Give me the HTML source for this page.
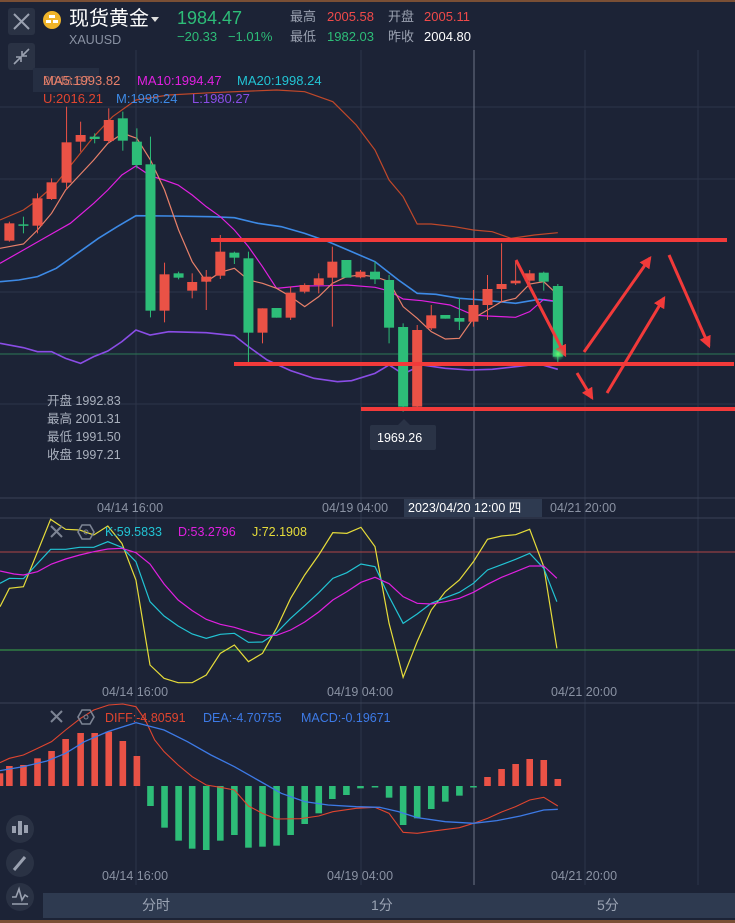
<!DOCTYPE html>
<html><head><meta charset="utf-8"><style>
*{margin:0;padding:0}
body{width:735px;height:923px;background:#1c2336;position:relative;overflow:hidden;font-family:"Liberation Sans","Noto Sans CJK SC",sans-serif}
.t{position:absolute;white-space:nowrap;line-height:1}
svg{position:absolute;left:0;top:0}
</style></head><body>
<svg width="735" height="923" viewBox="0 0 735 923">
<defs><marker id="ah" viewBox="0 0 10 10" refX="8" refY="5" markerWidth="4" markerHeight="4" orient="auto"><path d="M0,0L10,5L0,10z" fill="#f23a3a"/></marker>
<radialGradient id="gd"><stop offset="0" stop-color="#6cff6c"/><stop offset="1" stop-color="#2dbd78" stop-opacity="0"/></radialGradient></defs>
<rect x="0" y="0" width="735" height="2" fill="#7a4f35"/>
<rect x="0" y="920" width="735" height="3" fill="#7a4f35"/>
<g stroke="#2d3549" stroke-width="1">
<line x1="0" y1="107" x2="735" y2="107"/><line x1="0" y1="179" x2="735" y2="179"/><line x1="0" y1="292" x2="735" y2="292"/><line x1="0" y1="404" x2="735" y2="404"/>
<line x1="136" y1="50" x2="136" y2="885"/><line x1="361" y1="50" x2="361" y2="885"/><line x1="585" y1="50" x2="585" y2="885"/><line x1="698" y1="50" x2="698" y2="885"/>
</g>
<line x1="0" y1="498" x2="735" y2="498" stroke="#3a4257"/>
<line x1="0" y1="518" x2="735" y2="518" stroke="#3a4257"/>
<line x1="0" y1="703" x2="735" y2="703" stroke="#3a4257"/>
<line x1="474" y1="50" x2="474" y2="885" stroke="#6c7386"/>
<line x1="0" y1="354" x2="735" y2="354" stroke="#2c7a55"/>
<g transform="translate(0,80) scale(0.46875,0.33333)" fill="none" stroke-width="1.2">
<polyline vector-effect="non-scaling-stroke" stroke="#c0482a" points="0,420 50,390 80,360 120,310 160,240 200,170 240,110 290,60 360,45 450,38 590,30 650,35 710,65 760,135 800,210 830,300 860,350 890,432 920,432 970,440 1010,450 1050,455 1090,475 1140,465 1190,458"/>
<polyline vector-effect="non-scaling-stroke" stroke="#3d8ae6" stroke-width="1.6" points="0,605 40,600 80,590 120,565 170,515 210,475 250,440 290,407 360,408 450,410 500,413 550,430 600,440 650,460 700,485 750,515 800,545 850,600 890,640 930,643 980,655 1030,660 1100,670 1150,658 1190,665"/>
<polyline vector-effect="non-scaling-stroke" stroke="#8a4de6" stroke-width="1.6" points="0,790 50,803 80,815 110,815 140,835 172,850 200,830 230,813 260,785 290,750 320,765 360,755 440,758 500,767 530,800 570,840 620,872 670,895 720,905 750,902 800,880 830,855 860,882 900,855 950,865 1000,870 1050,868 1100,860 1150,852 1190,868"/>
<polyline vector-effect="non-scaling-stroke" stroke="#e020e0" points="0,550 50,510 100,470 150,430 200,370 230,330 260,285 290,258 320,287 350,300 380,315 410,345 440,380 470,410 500,450 530,500 560,560 590,625 640,618 700,617 740,615 800,622 830,633 860,657 900,662 960,675 1010,705 1040,708 1100,712 1130,695 1160,658 1190,665"/>
<polyline vector-effect="non-scaling-stroke" stroke="#e8806a" points="0,505 50,492 80,450 110,400 140,330 170,285 200,240 230,190 262,160 292,175 321,240 351,330 381,450 410,545 440,605 470,577 500,565 530,600 560,610 590,625 620,650 650,680 680,650 709,610 739,590 769,585 800,590 830,605 860,680 890,715 920,755 950,777 980,775 1010,715 1040,690 1070,665 1100,655 1130,612 1160,605 1190,645"/>
</g>
<g id="candles"></g>
<g fill="#f23a3a">
<rect x="211" y="238" width="516" height="4"/>
<rect x="234" y="362" width="500" height="4"/>
<rect x="361" y="407" width="374" height="4"/>
</g>
<g stroke="#f23a3a" stroke-width="3" marker-end="url(#ah)" fill="none">
<line x1="516" y1="260" x2="565" y2="355"/>
<line x1="577" y1="373" x2="592" y2="398"/>
<line x1="584" y1="352" x2="650" y2="258"/>
<line x1="607" y1="393" x2="664" y2="298"/>
<line x1="669" y1="255" x2="709" y2="346"/>
</g>
<circle cx="558" cy="354" r="7" fill="url(#gd)"/>
<line x1="0" y1="552" x2="735" y2="552" stroke="#b04545"/>
<line x1="0" y1="650" x2="735" y2="650" stroke="#3aa84a"/>
<g transform="translate(0,490) scale(0.46875,0.33333)" fill="none">
<polyline vector-effect="non-scaling-stroke" stroke="#e6dc3a" stroke-width="1.2" points="0,350 20,295 50,290 108,88 140,118 170,120 200,135 230,108 260,160 290,270 320,525 350,565 380,578 410,578 440,555 470,490 500,465 530,515 560,490 590,415 620,325 650,255 680,195 710,128 740,130 770,112 800,170 830,400 860,562 890,455 920,360 950,305 980,270 1010,215 1040,148 1070,138 1100,134 1130,118 1160,230 1188,475"/>
<polyline vector-effect="non-scaling-stroke" stroke="#22c4d4" stroke-width="1.2" points="0,280 20,265 50,266 108,178 140,178 170,172 200,172 230,155 260,172 290,215 320,335 350,378 380,408 410,432 440,445 470,433 500,430 530,457 560,456 590,428 620,385 650,347 680,308 710,265 740,248 770,222 800,230 830,320 860,400 890,372 920,340 950,323 980,307 1010,280 1040,240 1070,224 1100,208 1130,190 1160,235 1188,335"/>
<polyline vector-effect="non-scaling-stroke" stroke="#e020e0" stroke-width="1.2" points="0,243 30,252 50,255 80,245 110,222 140,207 170,195 200,185 230,177 260,175 290,188 320,222 350,282 380,330 410,362 440,388 470,403 500,412 530,425 560,436 590,436 620,420 650,396 680,366 710,330 740,305 770,277 800,262 830,281 860,320 890,340 920,342 950,335 980,325 1010,307 1040,283 1070,262 1100,245 1130,228 1160,228 1188,265"/>
</g>
<g id="macd"></g>
<g transform="translate(0,700) scale(0.46875,0.33333)" fill="none">
<polyline vector-effect="non-scaling-stroke" stroke="#e0452f" stroke-width="1.1" points="0,188 20,175 50,165 80,145 110,125 140,90 172,55 200,30 232,15 262,12 290,20 310,60 330,120 350,155 380,195 410,230 440,255 470,262 500,270 530,318 560,340 590,357 640,356 680,348 710,335 760,325 800,322 830,340 860,397 890,400 930,392 980,383 1010,370 1040,355 1070,336 1100,320 1130,300 1160,292 1190,318"/>
<polyline vector-effect="non-scaling-stroke" stroke="#3d7ae6" stroke-width="1.3" points="0,212 50,200 100,183 140,160 180,125 230,95 290,68 350,90 400,125 450,165 500,200 550,240 600,280 650,305 700,315 760,320 810,322 850,335 890,353 950,365 1010,370 1060,362 1110,348 1160,330 1190,328"/>
</g>
<rect x="8" y="8" width="27" height="27" rx="3" fill="#2a3244"/>
<path d="M14,14L29,29M29,14L14,29" stroke="#9aa1b0" stroke-width="2"/>
<rect x="8" y="43" width="27" height="27" rx="3" fill="#2a3244"/>
<path d="M14,64L20,58M16,57h5v5M29,49L23,55M22,51v5h5" stroke="#9aa1b0" stroke-width="1.6" fill="none"/>
<circle cx="20" cy="829" r="14" fill="#2a3244"/>
<g fill="#9aa1b0"><rect x="12" y="826" width="4" height="7"/><rect x="18" y="821" width="4" height="14"/><rect x="24" y="825" width="4" height="8"/></g>
<circle cx="20" cy="863" r="14" fill="#2a3244"/>
<path d="M14,870L25,857" stroke="#9aa1b0" stroke-width="3"/>
<circle cx="20" cy="897" r="14" fill="#2a3244"/>
<path d="M12,897L16,897L19,889L22,900L25,895L28,897M12,904H28" stroke="#9aa1b0" stroke-width="1.6" fill="none"/>
<path d="M51,526L62,537M62,526L51,537" stroke="#7d8494" stroke-width="2"/>
<polygon points="82,525 90,525 94,532 90,539 82,539 78,532" fill="none" stroke="#7d8494" stroke-width="1.6"/><circle cx="86" cy="532" r="2" fill="none" stroke="#7d8494"/>
<path d="M51,711L62,722M62,711L51,722" stroke="#7d8494" stroke-width="2"/>
<polygon points="82,710 90,710 94,717 90,724 82,724 78,717" fill="none" stroke="#7d8494" stroke-width="1.6"/><circle cx="86" cy="717" r="2" fill="none" stroke="#7d8494"/>
<circle cx="52" cy="20" r="9" fill="#f0b429"/>
<g fill="#fff"><rect x="49" y="15" width="6" height="3"/><rect x="46" y="20" width="5" height="3"/><rect x="53" y="20" width="5" height="3"/></g>
<polygon points="151,17 159,17 155,22" fill="#ddd"/>
<rect x="370" y="425" width="66" height="25" rx="2" fill="#2a3346"/>
<polygon points="398,425 404,419 410,425" fill="#2a3346"/>
<rect x="404" y="499" width="138" height="18" fill="#2e3a50"/>
<rect x="43" y="893" width="692" height="25" fill="#2e3a50"/>
<rect x="33" y="68" width="66" height="24" fill="#252e42"/>
</svg>
<div class="t" style="left:69px;top:9px;font-size:20px;color:#fff">现货黄金</div>
<div class="t" style="left:69px;top:34px;font-size:12.5px;color:#8a92a3">XAUUSD</div>
<div class="t" style="left:177px;top:9px;font-size:18px;color:#2dbd78">1984.47</div>
<div class="t" style="left:177px;top:30px;font-size:13px;color:#2dbd78">−20.33&nbsp;&nbsp;&nbsp;−1.01%</div>
<div class="t" style="left:290px;top:10px;font-size:13px;color:#9aa1b0">最高</div>
<div class="t" style="left:327px;top:10px;font-size:13px;color:#f04a4a">2005.58</div>
<div class="t" style="left:388px;top:10px;font-size:13px;color:#9aa1b0">开盘</div>
<div class="t" style="left:424px;top:10px;font-size:13px;color:#f04a4a">2005.11</div>
<div class="t" style="left:290px;top:30px;font-size:13px;color:#9aa1b0">最低</div>
<div class="t" style="left:327px;top:30px;font-size:13px;color:#2dbd78">1982.03</div>
<div class="t" style="left:388px;top:30px;font-size:13px;color:#9aa1b0">昨收</div>
<div class="t" style="left:424px;top:30px;font-size:13px;color:#fff">2004.80</div>
<div class="t" style="left:43px;top:74px;font-size:13px;color:#e8806a">MA5:1993.82</div>
<div class="t" style="left:43px;top:74px;font-size:13px;color:#e8806a;opacity:.6">2048.67</div>
<div class="t" style="left:137px;top:74px;font-size:13px;color:#e020e0">MA10:1994.47</div>
<div class="t" style="left:237px;top:74px;font-size:13px;color:#22c4d4">MA20:1998.24</div>
<div class="t" style="left:43px;top:92px;font-size:13px;color:#e0452f">U:2016.21</div>
<div class="t" style="left:116px;top:92px;font-size:13px;color:#3d8ae6">M:1998.24</div>
<div class="t" style="left:192px;top:92px;font-size:13px;color:#8a4de6">L:1980.27</div>
<div class="t" style="left:47px;top:392px;font-size:12.5px;color:#a9b0bd;line-height:18px">开盘 1992.83<br>最高 2001.31<br>最低 1991.50<br>收盘 1997.21</div>
<div class="t" style="left:377px;top:432px;font-size:12.5px;color:#fff">1969.26</div>
<div class="t" style="left:97px;top:502px;font-size:12.5px;color:#8a92a3">04/14 16:00</div>
<div class="t" style="left:322px;top:502px;font-size:12.5px;color:#8a92a3">04/19 04:00</div>
<div class="t" style="left:408px;top:502px;font-size:12.5px;color:#fff">2023/04/20 12:00 四</div>
<div class="t" style="left:550px;top:502px;font-size:12.5px;color:#8a92a3">04/21 20:00</div>
<div class="t" style="left:105px;top:526px;font-size:12.5px;color:#22c4d4">K:59.5833</div>
<div class="t" style="left:178px;top:526px;font-size:12.5px;color:#e020e0">D:53.2796</div>
<div class="t" style="left:252px;top:526px;font-size:12.5px;color:#e6dc3a">J:72.1908</div>
<div class="t" style="left:102px;top:686px;font-size:12.5px;color:#8a92a3">04/14 16:00</div>
<div class="t" style="left:327px;top:686px;font-size:12.5px;color:#8a92a3">04/19 04:00</div>
<div class="t" style="left:551px;top:686px;font-size:12.5px;color:#8a92a3">04/21 20:00</div>
<div class="t" style="left:105px;top:712px;font-size:12.5px;color:#e0452f">DIFF:-4.80591</div>
<div class="t" style="left:203px;top:712px;font-size:12.5px;color:#3d7ae6">DEA:-4.70755</div>
<div class="t" style="left:301px;top:712px;font-size:12.5px;color:#3d7ae6">MACD:-0.19671</div>
<div class="t" style="left:102px;top:870px;font-size:12.5px;color:#8a92a3">04/14 16:00</div>
<div class="t" style="left:327px;top:870px;font-size:12.5px;color:#8a92a3">04/19 04:00</div>
<div class="t" style="left:551px;top:870px;font-size:12.5px;color:#8a92a3">04/21 20:00</div>
<div class="t" style="left:142px;top:898px;font-size:14px;color:#9aa3b3">分时</div>
<div class="t" style="left:371px;top:898px;font-size:14px;color:#9aa3b3">1分</div>
<div class="t" style="left:597px;top:898px;font-size:14px;color:#9aa3b3">5分</div>
<script>
var NS="http://www.w3.org/2000/svg";
function el(p,t,a){var e=document.createElementNS(NS,t);for(var k in a)e.setAttribute(k,a[k]);p.appendChild(e);}
var R="#ea5246",G="#2dbd78";
var c=[[20,430,482,'r',425,485],[50,433,437,'g',410,460],[80,355,437,'r',340,460],[110,307,357,'r',295,360],[142,187,308,'r',80,330],[172,165,185,'r',125,215],[202,170,177,'g',160,190],[232,120,183,'r',85,190],[262,115,182,'g',95,212],[292,185,255,'g',145,265],[321,253,692,'g',170,712],[351,583,692,'r',548,727],[381,580,593,'g',575,598],[410,606,632,'r',580,655],[440,590,605,'r',570,690],[470,515,587,'r',465,597],[500,518,533,'g',515,552],[530,535,758,'g',515,850],[560,685,758,'r',685,790],[590,684,713,'g',684,713],[620,638,713,'r',620,720],[650,615,635,'r',610,640],[680,595,615,'r',580,640],[709,545,593,'r',500,740],[739,540,593,'g',540,593],[769,575,592,'r',570,595],[800,575,598,'g',545,612],[830,600,743,'g',585,790],[860,741,980,'g',730,995],[890,750,980,'r',735,985],[920,706,745,'r',675,750],[950,705,716,'g',705,716],[980,714,725,'g',655,750],[1010,675,725,'r',630,740],[1040,627,675,'r',585,720],[1070,612,627,'r',490,665],[1100,602,610,'r',545,615],[1130,580,602,'r',570,612],[1160,578,605,'g',575,632],[1190,618,830,'g',612,850]];
var g=document.getElementById('candles');
c.forEach(function(d){var x=d[0]/2.1333,col=d[3]=='r'?R:G,y=80+d[1]/3,h=Math.max(1.5,(d[2]-d[1])/3);
el(g,'line',{x1:x,x2:x,y1:80+d[4]/3,y2:80+d[5]/3,stroke:col,'stroke-width':1});
el(g,'rect',{x:x-5,y:y,width:10,height:h,fill:col});});
var m=[[0,220],[20,198],[50,195],[80,175],[110,153],[140,117],[172,99],[202,99],[232,95],[262,123],[292,168],[321,318],[351,383],[381,422],[410,446],[440,450],[470,422],[500,405],[530,443],[560,440],[590,437],[620,405],[650,372],[680,340],[709,297],[739,285],[769,265],[800,262],[830,293],[860,375],[890,355],[920,327],[950,305],[980,287],[1010,262],[1040,231],[1070,207],[1100,192],[1130,177],[1160,180],[1190,237]];
var mg=document.getElementById('macd');
m.forEach(function(d){var x=d[0]/2.1333,y0=700+258/3,y=700+d[1]/3,col=d[1]<258?R:G;
el(mg,'rect',{x:x-3.3,y:Math.min(y,y0),width:6.6,height:Math.max(1.5,Math.abs(y-y0)),fill:col});});
</script>
</body></html>
